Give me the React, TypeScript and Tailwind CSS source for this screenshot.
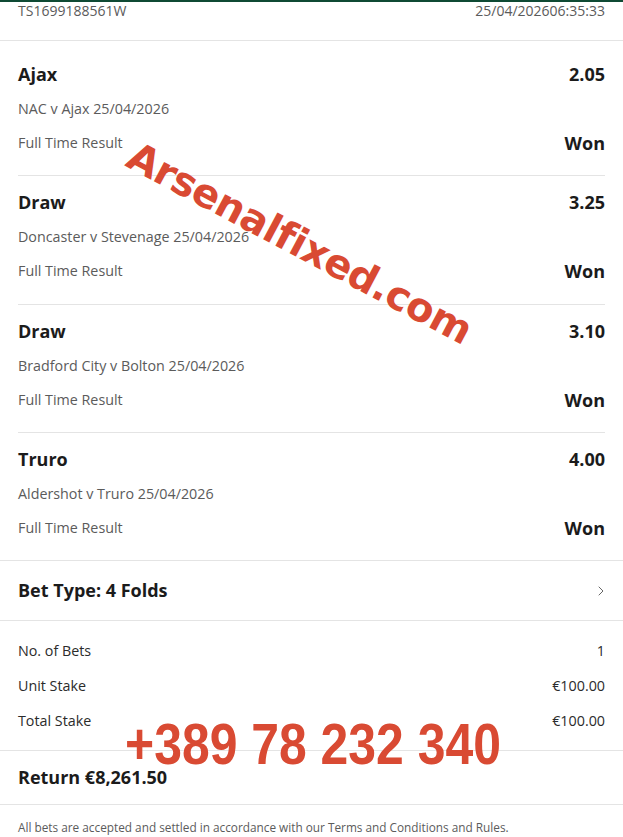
import { ChevronRight } from "lucide-react";

interface Selection {
  pick: string;
  odds: string;
  event: string;
  market: string;
  result: string;
}

const selections: Selection[] = [
  { pick: "Ajax", odds: "2.05", event: "NAC v Ajax 25/04/2026", market: "Full Time Result", result: "Won" },
  { pick: "Draw", odds: "3.25", event: "Doncaster v Stevenage 25/04/2026", market: "Full Time Result", result: "Won" },
  { pick: "Draw", odds: "3.10", event: "Bradford City v Bolton 25/04/2026", market: "Full Time Result", result: "Won" },
  { pick: "Truro", odds: "4.00", event: "Aldershot v Truro 25/04/2026", market: "Full Time Result", result: "Won" },
];

// block heights taken from the slip (first one has extra top space)
const blockClass = [
  "h-[135px] pt-[21px] border-b border-[#e4e4e4]",
  "h-[129px] pt-[14px] border-b border-[#e4e4e4]",
  "h-[128px] pt-[14px] border-b border-[#e4e4e4]",
  "h-[127px] pt-[14px]",
];

function SelectionRow({ s, idx }: { s: Selection; idx: number }) {
  return (
    <div className={blockClass[idx]}>
      <div className="flex justify-between items-center h-[24px]">
        <span className="text-[18px] font-bold text-[#1b1b1b]">{s.pick}</span>
        <span className="text-[18px] font-bold text-[#1b1b1b]">{s.odds}</span>
      </div>
      <div className="mt-[13px] h-[20px] flex items-center text-[14.3px] text-[#5b5b5b]">{s.event}</div>
      <div className="mt-[12px] flex justify-between items-center h-[24px]">
        <span className="text-[14.3px] text-[#5b5b5b]">{s.market}</span>
        <span className="text-[18px] font-bold text-[#1b1b1b]">{s.result}</span>
      </div>
    </div>
  );
}

export default function App() {
  return (
    <div
      className="relative w-[623px] h-[837px] overflow-hidden bg-white border-t-2 border-[#0f4a34]"
      style={{ fontFamily: "'Open Sans', 'Noto Sans', sans-serif" }}
    >
      {/* header */}
      <div className="flex justify-between px-[18px] h-[39px] border-b border-[#e4e4e4] text-[14px] leading-[17px] text-[#5b5b5b]">
        <span>TS1699188561W</span>
        <span>25/04/202606:35:33</span>
      </div>

      {/* selections */}
      <div className="border-b border-[#e4e4e4]">
        <div className="px-[18px]">
          {selections.map((s, i) => (
            <SelectionRow key={i} s={s} idx={i} />
          ))}
        </div>
      </div>

      {/* bet type */}
      <div className="h-[60px] px-[18px] flex items-center justify-between border-b border-[#e4e4e4]">
        <span className="text-[18px] font-bold text-[#1b1b1b]">Bet Type: 4 Folds</span>
        <ChevronRight className="w-[16px] h-[16px] -mr-[4px] text-[#666]" strokeWidth={1.5} />
      </div>

      {/* stakes */}
      <div className="h-[130px] px-[18px] pt-[12px] border-b border-[#e4e4e4] text-[14.3px] text-[#2b2b2b]">
        <div className="flex justify-between items-center h-[35px]">
          <span>No. of Bets</span>
          <span>1</span>
        </div>
        <div className="flex justify-between items-center h-[35px]">
          <span>Unit Stake</span>
          <span>€100.00</span>
        </div>
        <div className="flex justify-between items-center h-[35px]">
          <span>Total Stake</span>
          <span>€100.00</span>
        </div>
      </div>

      {/* return */}
      <div className="h-[54px] px-[18px] flex items-center border-b border-[#e4e4e4]">
        <span className="text-[18px] font-bold text-[#1b1b1b]">Return €8,261.50</span>
      </div>

      <div className="px-[18px] pt-[15px] text-[11.8px] leading-[15px] text-[#5b5b5b]">
        All bets are accepted and settled in accordance with our Terms and Conditions and Rules.
      </div>

      {/* watermark overlays */}
      <div
        className="absolute left-[300px] top-[241px] -translate-x-1/2 -translate-y-1/2 rotate-[28deg] whitespace-nowrap text-[40px] font-bold leading-none tracking-[-0.5px] text-[#d94a33]"
        style={{ fontFamily: "'DejaVu Sans', sans-serif" }}
      >
        Arsenalfixed.com
      </div>
      <div
        className="absolute left-[313px] top-[742px] -translate-x-1/2 -translate-y-1/2 scale-x-[0.86] whitespace-nowrap text-[58px] font-bold leading-none text-[#d94a33]"
        style={{ fontFamily: "'Liberation Sans', sans-serif" }}
      >
        +389 78 232 340
      </div>
    </div>
  );
}
